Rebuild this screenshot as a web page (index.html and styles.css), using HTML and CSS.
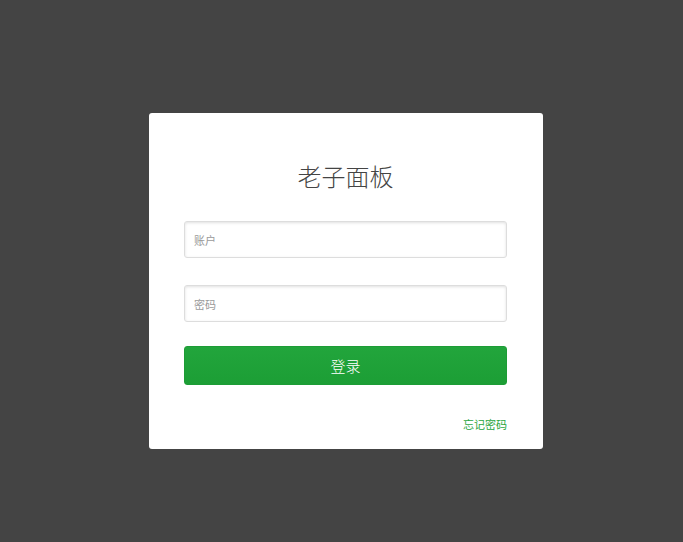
FILE: index.html
```html
<!DOCTYPE html>
<html lang="zh-CN">
<head>
<meta charset="utf-8">
<title>老子面板</title>
<link rel="stylesheet" href="styles.css">
</head>
<body>
<div class="card">
  <h1 class="title">老子面板</h1>
  <form class="form">
    <input class="field field-user" type="text" placeholder="账户">
    <input class="field field-pass" type="password" placeholder="密码">
    <button class="btn" type="button">登录</button>
    <div class="links"><a class="forgot" href="#">忘记密码</a></div>
  </form>
</div>
</body>
</html>
```
FILE: styles.css
```css
html, body {
  margin: 0;
  padding: 0;
}
body {
  background: #444444;
  width: 683px;
  height: 542px;
  overflow: hidden;
  font-family: "Liberation Sans", "Noto Sans CJK SC", sans-serif;
}
.card {
  box-sizing: border-box;
  width: 394px;
  height: 336px;
  margin: 113px 0 0 149px;
  padding: 46px 36px 17px 35px;
  background: #ffffff;
  border-radius: 3px;
}
.title {
  margin: 0 0 28px;
  font-size: 24px;
  line-height: 34px;
  font-weight: 300;
  color: #444444;
  text-align: center;
  font-family: "Noto Sans CJK SC", sans-serif;
}
.form {
  display: flex;
  flex-direction: column;
}
.field {
  box-sizing: border-box;
  height: 37px;
  width: 100%;
  padding: 0 9px;
  border: 1px solid #dddddd;
  border-radius: 3px;
  box-shadow: inset 0 1px 3px rgba(0,0,0,0.12);
  font-size: 11px;
  color: #555;
  outline: none;
  font-family: "Noto Sans CJK SC", sans-serif;
}
.field::placeholder {
  color: #9a9a9a;
}
.field-user {
  margin-bottom: 27px;
}
.field-pass {
  margin-bottom: 24px;
}
.btn {
  box-sizing: border-box;
  height: 39px;
  width: 100%;
  border: 1px solid #1d9c36;
  border-radius: 3px;
  background: linear-gradient(#22a53c, #1c9e35);
  color: #ffffff;
  font-size: 15px;
  font-family: "Noto Sans CJK SC", sans-serif;
  font-weight: 300;
  padding: 0;
}
.links {
  margin-top: 31px;
  height: 16px;
  line-height: 16px;
  text-align: right;
}
.forgot {
  color: #2aa63f;
  font-size: 11px;
  text-decoration: none;
  font-family: "Noto Sans CJK SC", sans-serif;
}
```
